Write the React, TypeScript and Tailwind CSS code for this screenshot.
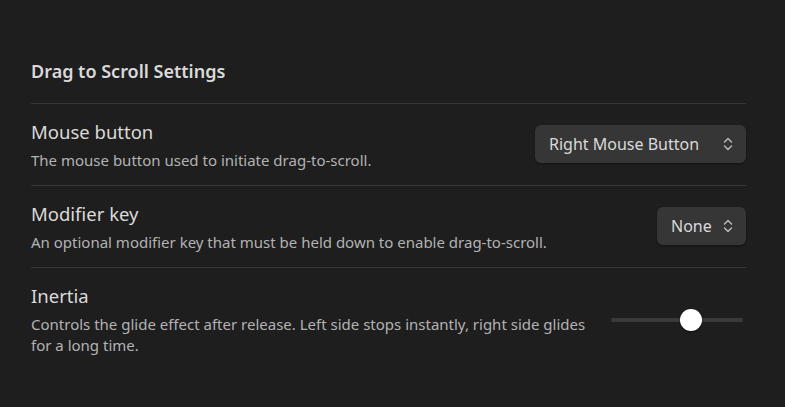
import React from 'react';

function UpDown() {
  return (
    <svg width="10" height="14" viewBox="0 0 10 14" fill="none" stroke="currentColor" strokeWidth="1.4" strokeLinecap="round" strokeLinejoin="round">
      <path d="M1.5 5 L5 1.5 L8.5 5" />
      <path d="M1.5 9 L5 12.5 L8.5 9" />
    </svg>
  );
}

function Dropdown({ label, width }: { label: string; width: string }) {
  return (
    <button className={`relative h-[38px] mb-1 rounded-[6px] bg-[#363636] pl-[14px] flex items-center text-[16px] text-[#dadada] shadow-[0_1px_2px_rgba(0,0,0,0.4)] ${width}`}>
      <span>{label}</span>
      <span className="absolute right-[13px] top-[12px] text-[#bdbdbd]">
        <UpDown />
      </span>
    </button>
  );
}

function Row({ title, desc, children }: { title: string; desc: string; children: React.ReactNode }) {
  return (
    <div className="flex items-center border-t border-[#363636] pt-4 pb-[14px]">
      <div className="flex-1 pr-[16px]">
        <div className="text-[18.5px] leading-6 text-[#dadada]">{title}</div>
        <div className="mt-1.5 text-[15px] leading-[21px] text-[#b3b3b3]">{desc}</div>
      </div>
      {children}
    </div>
  );
}

export default function App() {
  return (
    <div className="w-[785px] h-[407px] bg-[#1e1e1e] pl-[31px] pr-[39px] pt-[59px] font-['Noto_Sans',sans-serif]">
      <div className="text-[18px] leading-6 font-semibold text-[#dadada] pb-5">Drag to Scroll Settings</div>
      <Row title="Mouse button" desc="The mouse button used to initiate drag-to-scroll.">
        <Dropdown label="Right Mouse Button" width="w-[211px]" />
      </Row>
      <Row title="Modifier key" desc="An optional modifier key that must be held down to enable drag-to-scroll.">
        <Dropdown label="None" width="w-[89px]" />
      </Row>
      <Row title="Inertia" desc="Controls the glide effect after release. Left side stops instantly, right side glides for a long time.">
        <div className="relative w-[132px] h-[22px] mr-[3px] flex items-center">
          <div className="w-full h-1 rounded-full bg-[#3a3a3a]" />
          <div className="absolute left-[69px] top-0 w-[22px] h-[22px] rounded-full bg-white shadow-[0_1px_2px_rgba(0,0,0,0.5)]" />
        </div>
      </Row>
    </div>
  );
}
